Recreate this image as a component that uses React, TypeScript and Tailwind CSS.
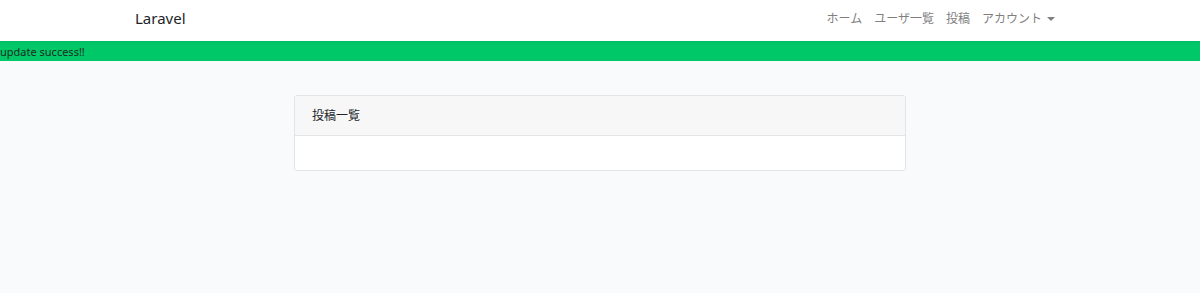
import React from 'react';

const navItems = ['ホーム', 'ユーザ一覧', '投稿'];

const font = { fontFamily: '"Noto Sans", "Noto Sans CJK JP", sans-serif' };

const App: React.FC = () => {
    return (
        <div className="min-h-[293px] bg-[#f8fafc] text-[#212529]" style={font}>
            <nav className="h-[41px] bg-white shadow-[0_1px_3px_rgba(0,0,0,0.08)] relative">
                <div className="w-[930px] mx-auto h-full flex items-center justify-between pb-[4px]">
                    <span className="text-[15px] text-[#212529] leading-none">Laravel</span>
                    <ul className="flex items-center gap-[12px] text-[12px] text-[#7f7f7f] mr-[10px] leading-none">
                        {navItems.map((item) => (
                            <li key={item}>{item}</li>
                        ))}
                        <li className="flex items-center">
                            アカウント
                            <span className="ml-[5px] w-0 h-0 border-l-[4px] border-r-[4px] border-t-[4px] border-l-transparent border-r-transparent border-t-[#7f7f7f]" />
                        </li>
                    </ul>
                </div>
            </nav>
            <div className="h-[20px] bg-[#00c868] flex items-center text-[11px] text-[#1a2e22] leading-none">
                update success!!
            </div>
            <main className="pt-[34px] flex justify-center">
                <div className="w-[612px] bg-white border border-[#e4e4e4] rounded-[3px] overflow-hidden">
                    <div className="h-[40px] bg-[#f7f7f7] border-b border-[#e4e4e4] flex items-center px-[17px] text-[12px] text-[#212529]">
                        投稿一覧
                    </div>
                    <div className="h-[34px]" />
                </div>
            </main>
        </div>
    );
};

export default App;
